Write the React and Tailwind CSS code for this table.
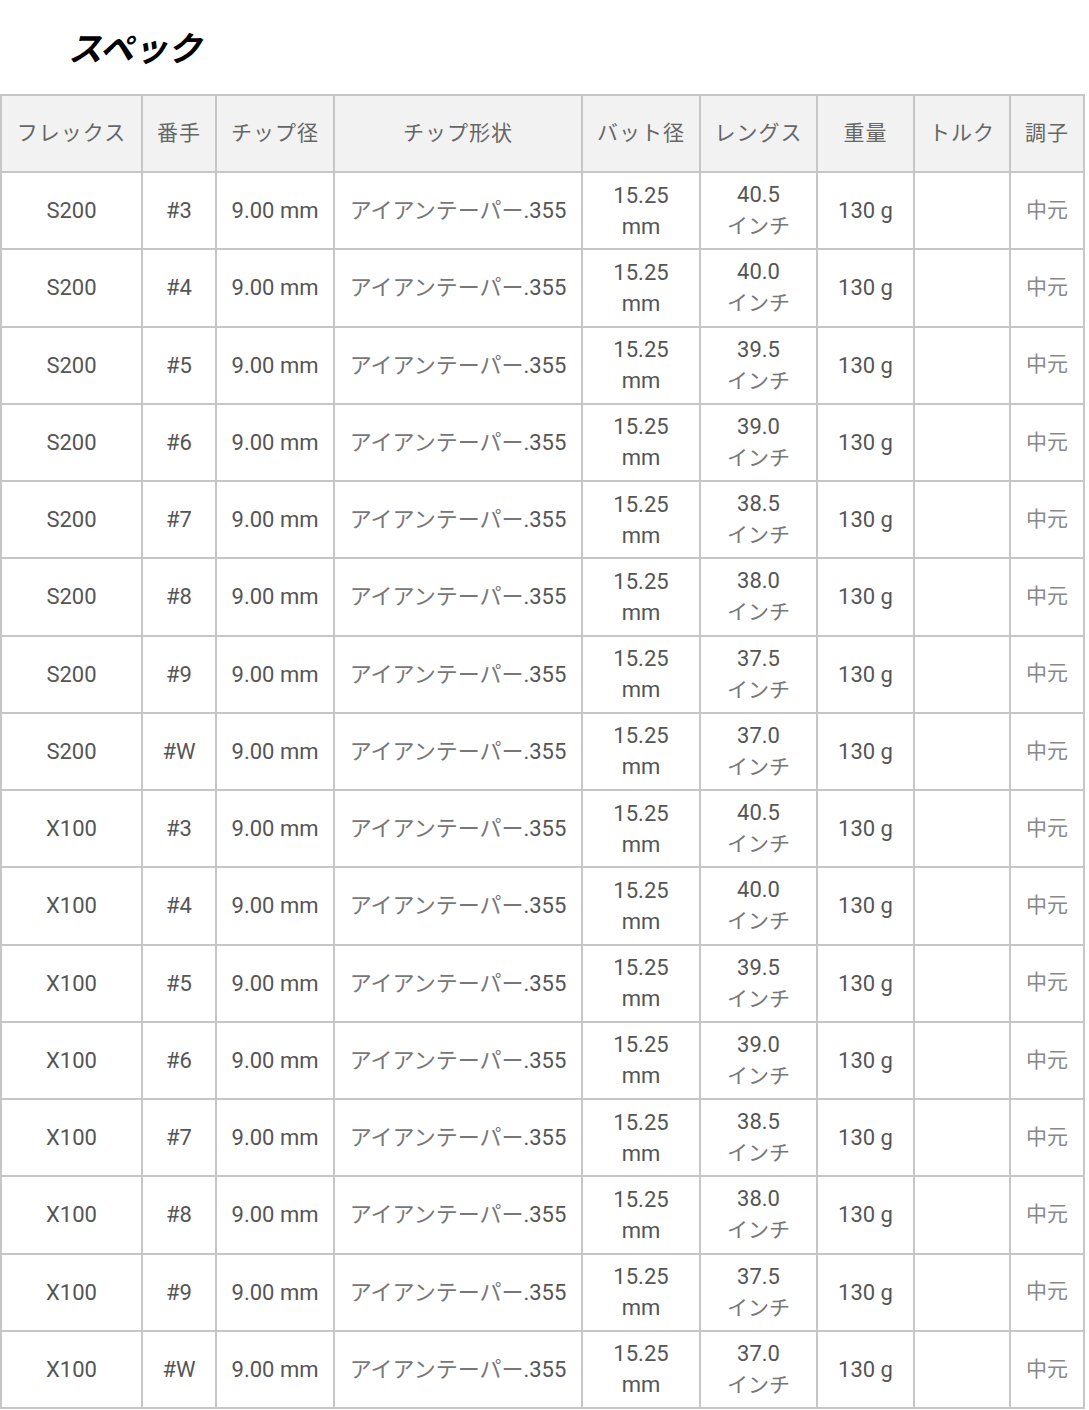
import React from "react";

const headers = ["フレックス", "番手", "チップ径", "チップ形状", "バット径", "レングス", "重量", "トルク", "調子"];
const widths = ["w-[141px]", "w-[74px]", "w-[118px]", "w-[248px]", "w-[118px]", "w-[117px]", "w-[97px]", "w-[96px]", "w-[74px]"];

const clubs = [
  { no: "#3", len: "40.5" },
  { no: "#4", len: "40.0" },
  { no: "#5", len: "39.5" },
  { no: "#6", len: "39.0" },
  { no: "#7", len: "38.5" },
  { no: "#8", len: "38.0" },
  { no: "#9", len: "37.5" },
  { no: "#W", len: "37.0" },
];

const rows = ["S200", "X100"].flatMap((flex) => clubs.map((c) => ({ flex, ...c })));

const cell = "border-2 border-[#c6c6c6] text-center align-middle p-0";

export default function App() {
  return (
    <div className="bg-white w-[1089px] min-h-[1410px] font-['Roboto','Noto_Sans_CJK_JP',sans-serif]">
      <h2 className="pl-[68px] pt-[22px] h-[94px] text-[34px] leading-[50px] font-bold italic text-black font-['Noto_Sans_CJK_JP',sans-serif]">
        スペック
      </h2>
      <table className="table-fixed border-collapse w-[1084px] text-[22px] text-[#555]">
        <colgroup>
          {widths.map((w, i) => (
            <col key={i} className={w} />
          ))}
        </colgroup>
        <thead>
          <tr className="h-[77px] bg-[#f2f2f2]">
            {headers.map((h) => (
              <th key={h} className={`${cell} font-normal text-[21px] text-[#666] tracking-[1px]`}>
                {h}
              </th>
            ))}
          </tr>
        </thead>
        <tbody>
          {rows.map((r, i) => (
            <tr key={i} className="h-[77.25px]">
              <td className={cell}>{r.flex}</td>
              <td className={cell}>{r.no}</td>
              <td className={cell}>9.00 mm</td>
              <td className={`${cell} text-[#777]`}>
                アイアンテーパー<span className="text-[#555]">.355</span>
              </td>
              <td className={`${cell} leading-[31px]`}>
                15.25
                <br />
                mm
              </td>
              <td className={`${cell} leading-[31px]`}>
                {r.len}
                <br />
                <span className="text-[#777] text-[21px]">インチ</span>
              </td>
              <td className={cell}>130 g</td>
              <td className={cell}></td>
              <td className={`${cell} text-[#888] text-[21px]`}>中元</td>
            </tr>
          ))}
        </tbody>
      </table>
    </div>
  );
}
